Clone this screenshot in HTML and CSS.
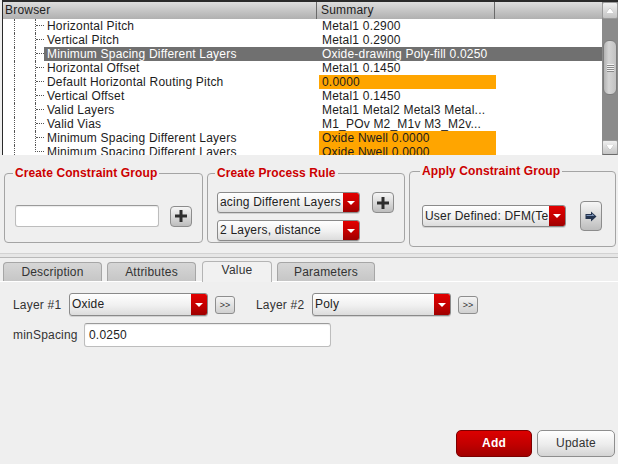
FILE: index.html
```html
<!DOCTYPE html>
<html>
<head>
<meta charset="utf-8">
<link rel="stylesheet" href="styles.css">
</head>
<body>
<div class="browser">
  <div class="main">
    <div class="hdr">
      <div class="hc c1">Browser</div>
      <div class="hc c2">Summary</div>
      <div class="hc c3"></div>
    </div>
    <div class="rows">
      <div class="row"><span class="tree"><i class="ta"></i><i class="tb"></i><i class="tc"><b></b></i></span><span class="nm">Horizontal Pitch</span><span class="sm">Metal1 0.2900</span><span class="rest"></span></div>
      <div class="row"><span class="tree"><i class="ta"></i><i class="tb"></i><i class="tc"><b></b></i></span><span class="nm">Vertical Pitch</span><span class="sm">Metal1 0.2900</span><span class="rest"></span></div>
      <div class="row sel"><span class="tree"><i class="ta"></i><i class="tb"></i><i class="tc"><b></b></i></span><span class="nm">Minimum Spacing Different Layers</span><span class="sm">Oxide-drawing Poly-fill 0.0250</span><span class="rest"></span></div>
      <div class="row"><span class="tree"><i class="ta"></i><i class="tb"></i><i class="tc"><b></b></i></span><span class="nm">Horizontal Offset</span><span class="sm">Metal1 0.1450</span><span class="rest"></span></div>
      <div class="row"><span class="tree"><i class="ta"></i><i class="tb"></i><i class="tc"><b></b></i></span><span class="nm">Default Horizontal Routing Pitch</span><span class="sm warn">0.0000</span><span class="rest"></span></div>
      <div class="row"><span class="tree"><i class="ta"></i><i class="tb"></i><i class="tc"><b></b></i></span><span class="nm">Vertical Offset</span><span class="sm">Metal1 0.1450</span><span class="rest"></span></div>
      <div class="row"><span class="tree"><i class="ta"></i><i class="tb"></i><i class="tc"><b></b></i></span><span class="nm">Valid Layers</span><span class="sm">Metal1 Metal2 Metal3 Metal...</span><span class="rest"></span></div>
      <div class="row"><span class="tree"><i class="ta"></i><i class="tb"></i><i class="tc"><b></b></i></span><span class="nm">Valid Vias</span><span class="sm">M1_POv M2_M1v M3_M2v...</span><span class="rest"></span></div>
      <div class="row"><span class="tree"><i class="ta"></i><i class="tb"></i><i class="tc"><b></b></i></span><span class="nm">Minimum Spacing Different Layers</span><span class="sm warn">Oxide Nwell 0.0000</span><span class="rest"></span></div>
      <div class="row last"><span class="tree"><i class="ta"></i><i class="tb"></i><i class="tc"><b></b></i></span><span class="nm">Minimum Spacing Different Layers</span><span class="sm warn">Oxide Nwell 0.0000</span><span class="rest"></span></div>
    </div>
  </div>
  <div class="sb">
    <div class="sbb up"><i class="tri-up"></i></div>
    <div class="track"><div class="thumb"><span class="grip"></span></div></div>
    <div class="sbb dn"><i class="tri-dn"></i></div>
  </div>
</div>

<div class="groups">
  <fieldset class="grp g1">
    <legend>Create Constraint Group</legend>
    <div class="gbody">
      <span class="input gin"></span>
      <span class="sq"><svg width="12" height="12" viewBox="0 0 12 12"><rect x="4.5" y="0" width="3" height="12" fill="#2e2e2e"/><rect x="0" y="4.5" width="12" height="3" fill="#2e2e2e"/></svg></span>
    </div>
  </fieldset>
  <fieldset class="grp g2">
    <legend>Create Process Rule</legend>
    <div class="gbody">
      <div class="stack">
        <div class="combo pc"><span class="txt">acing Different Layers</span><span class="dd"><i class="tri-w"></i></span></div>
        <div class="combo pc"><span class="txt">2 Layers, distance</span><span class="dd"><i class="tri-w"></i></span></div>
      </div>
      <span class="sq"><svg width="12" height="12" viewBox="0 0 12 12"><rect x="4.5" y="0" width="3" height="12" fill="#2e2e2e"/><rect x="0" y="4.5" width="12" height="3" fill="#2e2e2e"/></svg></span>
    </div>
  </fieldset>
  <fieldset class="grp g3">
    <legend>Apply Constraint Group</legend>
    <div class="gbody">
      <div class="combo ac"><span class="txt">User Defined: DFM(Te</span><span class="dd"><i class="tri-w"></i></span></div>
      <span class="sq tall"><svg width="12" height="11" viewBox="0 0 12 11"><polygon points="0.5,3 6,3 6,0.5 11.5,5.5 6,10.5 6,8 0.5,8" fill="#24344f"/><polygon points="1.5,4 7,4 7,2.5 9.5,5 1.5,5" fill="#7d93b8"/></svg></span>
    </div>
  </fieldset>
</div>

<div class="divider"></div>

<div class="tabs">
  <span class="tab t-desc">Description</span>
  <span class="tab t-attr">Attributes</span>
  <span class="tab t-val active">Value</span>
  <span class="tab t-par">Parameters</span>
</div>

<div class="panel">
  <div class="frow">
    <span class="lbl">Layer #1</span>
    <div class="combo lc"><span class="txt">Oxide</span><span class="dd"><i class="tri-w"></i></span></div>
    <span class="mini">&gt;&gt;</span>
    <span class="lbl lbl2">Layer #2</span>
    <div class="combo lc"><span class="txt">Poly</span><span class="dd"><i class="tri-w"></i></span></div>
    <span class="mini">&gt;&gt;</span>
  </div>
  <div class="frow r2">
    <span class="lbl lbl3">minSpacing</span>
    <span class="input sin">0.0250</span>
  </div>
  <div class="footer">
    <span class="btn add">Add</span>
    <span class="btn upd">Update</span>
  </div>
</div>
</body>
</html>
```

FILE: styles.css
```css
* { box-sizing: border-box; }
html, body { margin: 0; padding: 0; }
body {
  width: 618px;
  height: 464px;
  overflow: hidden;
  background: #efefef;
  font-family: "Liberation Sans", Arial, sans-serif;
  font-size: 12px;
  letter-spacing: 0.2px;
  color: #222;
  display: flex;
  flex-direction: column;
}

/* ---------- browser table ---------- */
.browser {
  flex: none;
  display: flex;
  height: 155px;
  margin-left: 2px;
  border-top: 2px solid #2a2a2a;
  border-left: 1px solid #2a2a2a;
  background: #fff;
}
.main { flex: 1; display: flex; flex-direction: column; min-width: 0; }
.hdr {
  flex: none;
  display: flex;
  height: 17px;
  background: linear-gradient(#dedede, #c6c6c6 50%, #b0b0b0);
}
.hc { line-height: 17px; padding-left: 2px; color: #222; white-space: nowrap; }
.c1 { width: 314px; border-right: 1px solid #6a6a6a; }
.c2 { width: 178px; padding-left: 4px; border-right: 1px solid #6a6a6a; }
.c3 { flex: 1; }

.rows { flex: 1; overflow: hidden; }
.row { display: flex; height: 14px; line-height: 14px; color: #1c1c1c; }
.tree { flex: none; width: 41px; display: flex; }
.tree i, .tree b { display: block; }
.ta { width: 11px; }
.tb { width: 21px; border-left: 1px dotted #555; }
.tc { width: 9px; border-left: 1px dotted #555; }
.tc b { height: 7px; border-bottom: 1px dotted #555; }
.row.last .tc { border-left: none; }
.row.last .tc b { border-left: 1px dotted #555; }
.nm { flex: none; width: 275px; padding-left: 3px; white-space: nowrap; overflow: hidden; }
.sm { flex: none; width: 177px; padding-left: 3px; white-space: nowrap; overflow: hidden; }
.rest { flex: 1; }
.sm.warn { background: #ffa500; }
.row.sel .nm, .row.sel .sm, .row.sel .rest { background: #707070; color: #fff; }

/* scrollbar */
.sb { flex: none; width: 16px; display: flex; flex-direction: column; background: #8a8a8a; }
.sbb {
  flex: none;
  height: 17px;
  display: flex;
  align-items: center;
  justify-content: center;
  background: linear-gradient(#f0f0f0, #c4c4c4);
  border: 1px solid #9a9a9a;
  border-radius: 2px;
}
.sbb.dn { height: 15px; border-bottom-color: #6a6a6a; }
.tri-up, .tri-dn { display: block; width: 0; height: 0; border-left: 4px solid transparent; border-right: 4px solid transparent; filter: drop-shadow(0 0 0.6px #666); }
.tri-up { border-bottom: 5px solid #fff; }
.tri-dn { border-top: 5px solid #fff; }
.track { flex: 1; padding: 21px 1px 0 1px; }
.thumb {
  height: 55px;
  border-radius: 6px;
  border: 1px solid #7c7c7c;
  background: linear-gradient(90deg, #b4b4b4, #d4d4d4 40%, #c2c2c2);
  display: flex;
  align-items: center;
  justify-content: center;
}
.grip { width: 7px; height: 8px; background: repeating-linear-gradient(#f2f2f2 0 1px, #8a8a8a 1px 2px); }

/* ---------- groups ---------- */
.groups {
  flex: none;
  display: flex;
  align-items: flex-start;
  height: 90px;
  margin-top: 8px;
  padding-left: 4px;
}
.grp {
  margin: 3px 0 0;
  padding: 0 10px;
  border: 1px solid #a4a4a4;
  border-radius: 4px;
  min-width: 0;
}
.grp legend {
  color: #cc0000;
  font-weight: bold;
  font-size: 12px;
  letter-spacing: 0.1px;
  line-height: 14px;
  padding: 0 2px;
  margin-left: -2px;
}
.g1 { width: 199px; height: 77px; }
.g2 { width: 198px; height: 77px; margin-left: 4px; padding-left: 9px; }
.g3 { width: 207px; height: 83px; margin-top: 1px; margin-left: 4px; padding-left: 12px; }
.gbody { display: flex; align-items: center; }
.g1 .gbody { padding-top: 25px; gap: 11px; }
.g2 .gbody { padding-top: 12px; align-items: flex-start; gap: 12px; }
.g3 .gbody { padding-top: 23px; gap: 14px; }
.stack { display: flex; flex-direction: column; gap: 7px; }

.input {
  display: block;
  height: 22px;
  background: #fff;
  border: 1px solid #bdbdbd;
  border-top-color: #9a9a9a;
  border-radius: 3px;
  box-shadow: inset 0 1px 1px rgba(0,0,0,0.08);
}
.gin { width: 144px; }

.sq {
  flex: none;
  width: 22px;
  height: 21px;
  display: flex;
  align-items: center;
  justify-content: center;
  border: 1px solid #8c8c8c;
  border-radius: 4px;
  background: linear-gradient(#f6f6f6, #d8d8d8 55%, #bdbdbd);
}
.sq.tall { height: 30px; }

.combo {
  display: flex;
  height: 21px;
  border: 1px solid #8a8a8a;
  border-radius: 3px;
  background: linear-gradient(#ffffff, #f0f0f0 55%, #dcdcdc);
  overflow: hidden;
  box-shadow: 0 1px 0 rgba(0,0,0,0.12);
}
.combo .txt { flex: 1; min-width: 0; padding-left: 2px; line-height: 19px; white-space: nowrap; overflow: hidden; color: #222; font-size: 12px; }
.combo .dd {
  flex: none;
  width: 16px;
  display: flex;
  align-items: center;
  justify-content: center;
  background: linear-gradient(#e20000, #c00000 60%, #9e0000);
}
.tri-w { display: block; width: 0; height: 0; border-left: 4px solid transparent; border-right: 4px solid transparent; border-top: 4px solid #fff; }
.pc { width: 143px; }
.ac { width: 144px; height: 22px; }
.ac .txt { line-height: 20px; }

/* ---------- divider & tabs ---------- */
.divider {
  flex: none;
  height: 5px;
  border-top: 1px solid #d2d2d2;
  border-bottom: 1px solid #b8b8b8;
  background: #e6e6e6;
}
.tabs {
  flex: none;
  display: flex;
  align-items: flex-end;
  height: 20px;
  margin-top: 3px;
  padding-left: 3px;
}
.tab {
  height: 19px;
  border: 1px solid #a6a6a6;
  border-bottom: none;
  border-radius: 4px 4px 0 0;
  background: linear-gradient(#d6d6d6, #c6c6c6);
  text-align: center;
  line-height: 18px;
  color: #333;
}
.t-desc { width: 99px; }
.t-attr { width: 89px; margin-left: 5px; }
.t-val { width: 70px; margin-left: 6px; }
.t-par { width: 98px; margin-left: 5px; }
.tab.active {
  position: relative;
  height: 21px;
  margin-bottom: -1px;
  background: #f1f1f1;
  border-color: #b4b4b4;
  line-height: 17px;
}

/* ---------- panel ---------- */
.panel {
  flex: 1;
  display: flex;
  flex-direction: column;
  border-top: 1px solid #fff;
  padding: 11px 3px 7px 13px;
}
.frow { display: flex; align-items: center; height: 23px; }
.frow.r2 { margin-top: 7px; height: 24px; }
.lbl { flex: none; width: 56px; color: #333; }
.lbl2 { margin-left: 21px; }
.lbl3 { width: 71px; }
.lc { width: 139px; height: 23px; }
.lc .txt { line-height: 21px; }
.mini {
  flex: none;
  width: 20px;
  height: 18px;
  margin-left: 7px;
  border: 1px solid #8e8e8e;
  border-radius: 3px;
  background: linear-gradient(#f4f4f4, #d0d0d0);
  font-size: 9px;
  letter-spacing: 0;
  line-height: 16px;
  text-align: center;
  color: #333;
}
.sin { width: 247px; height: 24px; line-height: 22px; padding-left: 4px; color: #222; }

.footer { margin-top: auto; display: flex; justify-content: flex-end; gap: 5px; }
.btn {
  height: 27px;
  line-height: 25px;
  text-align: center;
  border-radius: 5px;
}
.add {
  width: 76px;
  color: #fff;
  font-weight: bold;
  background: linear-gradient(#dc0000, #c00000 55%, #a20000);
  border: 1px solid #7c0000;
}
.upd {
  width: 78px;
  color: #333;
  background: linear-gradient(#ffffff, #ececec 55%, #d4d4d4);
  border: 1px solid #8e8e8e;
}
```
